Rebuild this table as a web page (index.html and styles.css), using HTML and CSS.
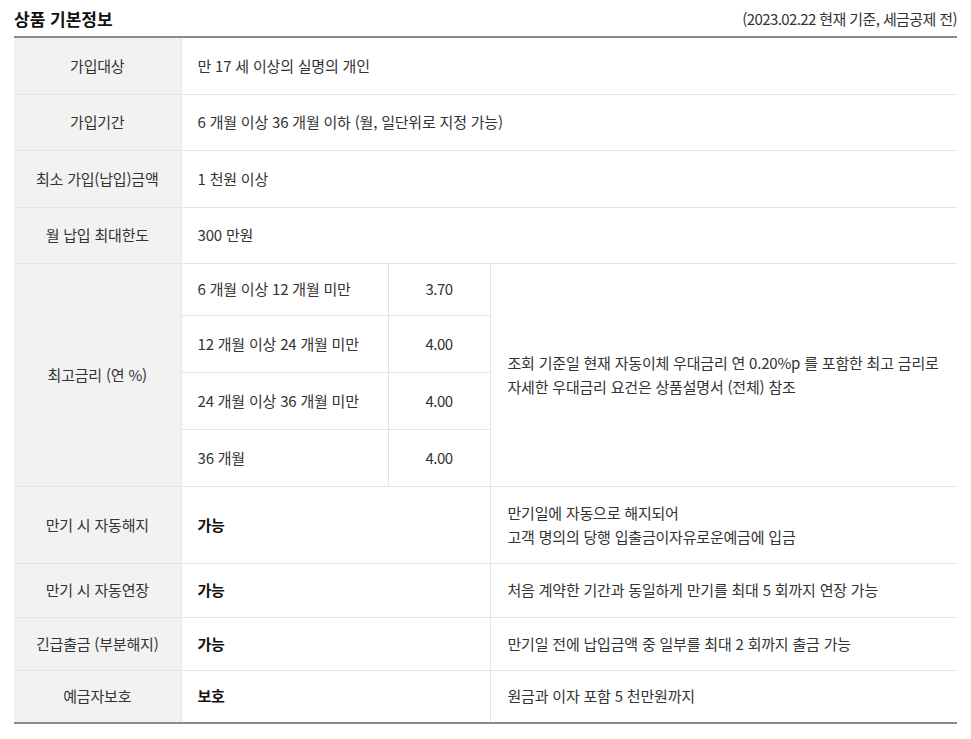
FILE: index.html
```html
<!DOCTYPE html>
<html lang="ko">
<head>
<meta charset="utf-8">
<title>상품 기본정보</title>
<link rel="stylesheet" href="styles.css">
</head>
<body>
<div class="wrap">
  <div class="head">
    <h2 class="title">상품 기본정보</h2>
    <span class="note">(2023.02.22 현재 기준, 세금공제 전)</span>
  </div>
  <table class="info">
    <colgroup>
      <col class="c-label">
      <col class="c-term">
      <col class="c-rate">
      <col class="c-desc">
    </colgroup>
    <tbody>
      <tr class="h57"><th>가입대상</th><td colspan="3">만 17 세 이상의 실명의 개인</td></tr>
      <tr class="h56"><th>가입기간</th><td colspan="3">6 개월 이상 36 개월 이하 (월, 일단위로 지정 가능)</td></tr>
      <tr class="h57"><th>최소 가입(납입)금액</th><td colspan="3">1 천원 이상</td></tr>
      <tr class="h56"><th>월 납입 최대한도</th><td colspan="3">300 만원</td></tr>
      <tr class="h52">
        <th rowspan="4">최고금리 (연 %)</th>
        <td class="line-r">6 개월 이상 12 개월 미만</td>
        <td class="rate line-r">3.70</td>
        <td class="desc" rowspan="4">조회 기준일 현재 자동이체 우대금리 연 0.20%p 를 포함한 최고 금리로<br>자세한 우대금리 요건은 상품설명서 (전체) 참조</td>
      </tr>
      <tr class="h57"><td class="line-r">12 개월 이상 24 개월 미만</td><td class="rate line-r">4.00</td></tr>
      <tr class="h57"><td class="line-r">24 개월 이상 36 개월 미만</td><td class="rate line-r">4.00</td></tr>
      <tr class="h57"><td class="line-r">36 개월</td><td class="rate line-r">4.00</td></tr>
      <tr class="h77"><th>만기 시 자동해지</th><td colspan="2" class="strong line-r">가능</td><td class="desc">만기일에 자동으로 해지되어<br>고객 명의의 당행 입출금이자유로운예금에 입금</td></tr>
      <tr class="h54"><th>만기 시 자동연장</th><td colspan="2" class="strong line-r">가능</td><td class="desc">처음 계약한 기간과 동일하게 만기를 최대 5 회까지 연장 가능</td></tr>
      <tr class="h53"><th>긴급출금 (부분해지)</th><td colspan="2" class="strong line-r">가능</td><td class="desc">만기일 전에 납입금액 중 일부를 최대 2 회까지 출금 가능</td></tr>
      <tr class="h53 last"><th>예금자보호</th><td colspan="2" class="strong line-r">보호</td><td class="desc">원금과 이자 포함 5 천만원까지</td></tr>
    </tbody>
  </table>
</div>
</body>
</html>
```

FILE: styles.css
```css
* { box-sizing: border-box; }
html, body { margin: 0; padding: 0; background: #fff; }
body {
  font-family: "Noto Sans CJK KR", "Noto Sans", sans-serif;
  color: #333;
  font-size: 15px;
}
.wrap { padding: 0 14px; }
.head {
  display: flex;
  justify-content: space-between;
  align-items: center;
  height: 36px;
}
.title {
  margin: 0;
  font-size: 17px;
  font-weight: 700;
  color: #111;
  letter-spacing: 0;
}
.note {
  font-size: 15px;
  color: #333;
  letter-spacing: -0.6px;
}
.info {
  width: 943px;
  border-collapse: collapse;
  table-layout: fixed;
  border-top: 2px solid #8a8a8a;
  border-bottom: 2px solid #8a8a8a;
}
.c-label { width: 167px; }
.c-term { width: 207px; }
.c-rate { width: 102px; }
.c-desc { width: 467px; }
.info th, .info td {
  border-bottom: 1px solid #e4e4e4;
  padding: 0;
  line-height: 24px;
  vertical-align: middle;
  text-align: left;
  letter-spacing: -0.2px;
}
.info th {
  background: #f2f2f2;
  font-weight: 400;
  text-align: center;
  color: #333;
  border-right: 1px solid #e4e4e4;
}
.info td { padding-left: 16px; }
.info td.rate { text-align: center; padding-left: 0; letter-spacing: -0.6px; }
.info td.desc { padding-left: 17px; }
.info td.line-r { border-right: 1px solid #e4e4e4; }
.info td.strong { font-weight: 700; color: #111; }
.info tr.last th, .info tr.last td { border-bottom: none; }
.h52 { height: 52px; }
.h53 { height: 53px; }
.h54 { height: 54px; }
.h56 { height: 56px; }
.h57 { height: 57px; }
.h77 { height: 77px; }
```
